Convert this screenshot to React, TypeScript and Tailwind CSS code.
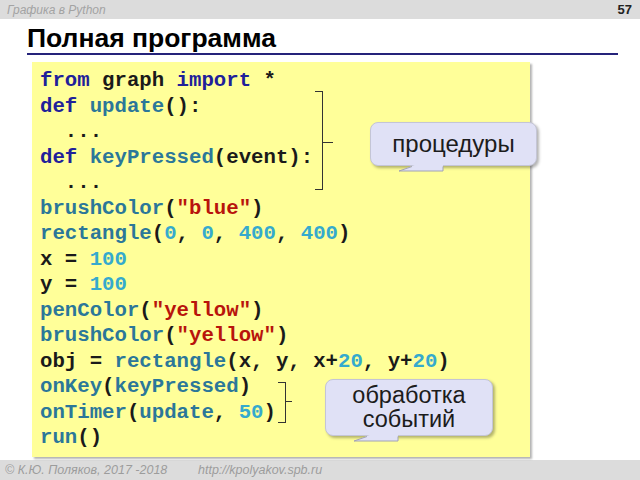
type Tok = [string, string]

const K = 'text-[#20209a]'
const F = 'text-[#2b7799]'
const N = 'text-[#35aacd]'
const S = 'text-[#b8140c]'
const B = 'text-[#1a1a1a]'

const lines: Tok[][] = [
  [['from', K], [' graph ', B], ['import', K], [' *', B]],
  [['def', K], [' ', B], ['update', F], ['():', B]],
  [['  ...', B]],
  [['def', K], [' ', B], ['keyPressed', F], ['(event):', B]],
  [['  ...', B]],
  [['brushColor', F], ['(', B], ['"blue"', S], [')', B]],
  [['rectangle', F], ['(', B], ['0', N], [', ', B], ['0', N], [', ', B], ['400', N], [', ', B], ['400', N], [')', B]],
  [['x = ', B], ['100', N]],
  [['y = ', B], ['100', N]],
  [['penColor', F], ['(', B], ['"yellow"', S], [')', B]],
  [['brushColor', F], ['(', B], ['"yellow"', S], [')', B]],
  [['obj = ', B], ['rectangle', F], ['(x, y, x+', B], ['20', N], [', y+', B], ['20', N], [')', B]],
  [['onKey', F], ['(', B], ['keyPressed', F], [')', B]],
  [['onTimer', F], ['(', B], ['update', F], [', ', B], ['50', N], [')', B]],
  [['run', F], ['()', B]],
]

function Tail({ className }: { className: string }) {
  return (
    <svg className={`absolute ${className}`} width="60" height="22" viewBox="0 0 60 22">
      <polygon points="8,17 34,7 52,7 52,17" fill="#e0e1f6" />
      <polyline points="21,12.5 8,17 52,17 52,12.5" fill="none" stroke="#a2a3b4" strokeWidth="1" />
    </svg>
  )
}

export default function App() {
  return (
    <div className="w-[640px] h-[480px] bg-white flex flex-col overflow-hidden font-['Liberation_Sans',Arial,sans-serif]">
      <div className="h-[19px] bg-[#dcdcdc] flex items-center justify-between pl-[7px] pr-[8px]">
        <span className="italic text-[12px] text-[#a3a3a3]">Графика в Python</span>
        <span className="font-bold text-[13px] text-[#222]">57</span>
      </div>

      <div className="pl-[27px] pt-[5px]">
        <h1 className="font-bold text-[26.5px] leading-[29px] text-black">Полная программа</h1>
        <div className="h-[2px] w-[591px] bg-[#25237a]" />
      </div>

      <div className="relative ml-[32px] mt-[7px] w-[498px] h-[395px] bg-[#ffff99] shadow-[2px_2px_2px_rgba(0,0,0,0.3)] pl-[8px] pt-[6px] font-['Liberation_Mono','Courier_New',monospace] font-bold text-[20.7px] leading-[25.5px]">
        {lines.map((ln, i) => (
          <div key={i} className="whitespace-pre">
            {ln.map(([t, c], j) => (
              <span key={j} className={c}>{t}</span>
            ))}
          </div>
        ))}

        {/* bracket for procedures */}
        <div className="absolute left-[283px] top-[29px] w-[8px] h-[99px] border-t border-r border-b border-[#333]" />
        <div className="absolute left-[291px] top-[80px] w-[10px] h-px bg-[#333]" />

        {/* bracket for events */}
        <div className="absolute left-[246px] top-[320px] w-[8px] h-[41px] border-t border-r border-b border-[#333]" />
        <div className="absolute left-[254px] top-[339px] w-[6px] h-px bg-[#333]" />

        <div className="absolute left-[338px] top-[60px] w-[167px] h-[44px] rounded-[8px] bg-[#e0e1f6] border border-[#c4c5d6] shadow-[2px_2px_3px_rgba(0,0,0,0.3)] flex items-center justify-center font-['Liberation_Sans',Arial,sans-serif] font-normal text-[24px] leading-[26px] text-[#1c1c1c]">
          процедуры
          <Tail className="left-[20px] top-[31px]" />
        </div>

        <div className="absolute left-[293px] top-[317px] w-[168px] h-[57px] rounded-[8px] bg-[#e0e1f6] border border-[#c4c5d6] shadow-[2px_2px_3px_rgba(0,0,0,0.3)] flex flex-col items-center justify-center font-['Liberation_Sans',Arial,sans-serif] font-normal text-[23.5px] leading-[23.5px] text-[#1c1c1c]">
          <span>обработка</span>
          <span>событий</span>
          <Tail className="left-[20px] top-[44px]" />
        </div>
      </div>

      <div className="mt-auto h-[20px] bg-[#dcdcdc] flex items-center pl-[5px] italic text-[12.5px] text-[#9c9c9c]">
        <span className="w-[193px]">© К.Ю. Поляков, 2017 -2018</span>
        <span>http://kpolyakov.spb.ru</span>
      </div>
    </div>
  )
}
